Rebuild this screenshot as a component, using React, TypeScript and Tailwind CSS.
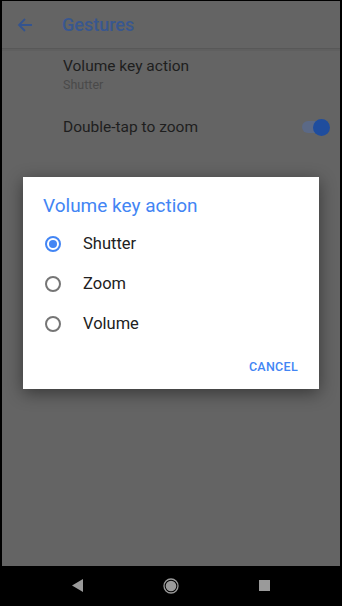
import React from "react";

function Radio({ checked }: { checked: boolean }) {
  return (
    <div
      className={
        "w-[16px] h-[16px] rounded-full border-2 flex items-center justify-center " +
        (checked ? "border-[#4285f4]" : "border-[#757575]")
      }
    >
      {checked && <div className="w-[8px] h-[8px] rounded-full bg-[#4285f4]" />}
    </div>
  );
}

export default function App() {
  const options = ["Shutter", "Zoom", "Volume"];
  return (
    <div
      className="w-[342px] h-[606px] bg-black relative overflow-hidden flex flex-col"
      style={{ fontFamily: "Roboto, 'Noto Sans', sans-serif" }}
    >
      <div className="mx-[2px] mt-px h-[565px] bg-[#646464] flex flex-col">
        <div className="h-[47px] flex items-center">
          <svg width="16" height="16" viewBox="0 0 16 16" className="ml-[15px]">
            <path d="M15 8H2M8 2L2 8l6 6" stroke="#34548f" strokeWidth="1.8" fill="none" />
          </svg>
          <div className="ml-[29px] text-[18px] font-medium text-[#38578f] leading-none">Gestures</div>
        </div>
        <div className="h-px bg-[#585858]" />
        <div className="h-[2px] bg-[#5f5f5f]" />
        <div className="pl-[61px] pt-[5px]">
          <div className="text-[15.5px] text-[#1e1e1e] leading-[20px]">Volume key action</div>
          <div className="text-[12.5px] text-[#4a4a4a] leading-[18px]">Shutter</div>
        </div>
        <div className="pl-[61px] pr-[10px] mt-[23px] flex items-center justify-between">
          <div className="text-[15.5px] text-[#1e1e1e] leading-[20px]">Double-tap to zoom</div>
          <div className="relative w-[28px] h-[18px] flex items-center">
            <div className="w-[22px] h-[12px] rounded-full bg-[#5b6986]" />
            <div className="absolute right-0 w-[17px] h-[17px] rounded-full bg-[#1f4d9e]" />
          </div>
        </div>
      </div>
      <div className="flex-1 flex items-center justify-center gap-[80px] pb-[1px]">
        <svg width="11" height="13" viewBox="0 0 11 13">
          <path d="M11 0L0 6.5L11 13Z" fill="#9a9a9a" />
        </svg>
        <svg width="16" height="16" viewBox="0 0 16 16">
          <circle cx="8" cy="8" r="7" fill="none" stroke="#9a9a9a" strokeWidth="1.3" />
          <circle cx="8" cy="8" r="5.3" fill="#9a9a9a" />
        </svg>
        <div className="w-[11px] h-[11px] bg-[#9a9a9a]" />
      </div>

      <div className="absolute left-[23px] top-[177px] w-[296px] h-[212px] bg-white shadow-[0_4px_16px_rgba(0,0,0,0.45)] flex flex-col">
        <div className="pl-[20px] pt-[18px] text-[19px] text-[#4285f4] leading-[22px]">Volume key action</div>
        <div className="flex flex-col mt-[7px]">
          {options.map((o, i) => (
            <div key={o} className="h-[40px] flex items-center pl-[22px]">
              <Radio checked={i === 0} />
              <div className="ml-[22px] text-[16.5px] text-[#212121]">{o}</div>
            </div>
          ))}
        </div>
        <div className="flex justify-end pr-[21px] mt-[14px]">
          <div className="text-[12.5px] font-medium text-[#4285f4] tracking-[0.3px]">CANCEL</div>
        </div>
      </div>
    </div>
  );
}
